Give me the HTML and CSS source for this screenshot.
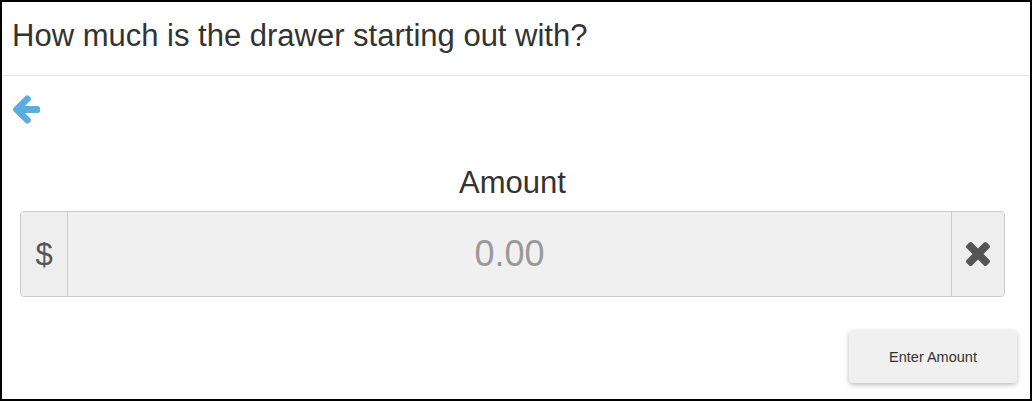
FILE: index.html
```html
<!DOCTYPE html>
<html lang="en">

<head>
    <meta charset="UTF-8">
    <meta name="viewport" content="width=device-width, initial-scale=1.0">
    <title>Starting Amount</title>
    <link rel="stylesheet" href="styles.css">
</head>

<body>
    <div class="frame">
        <!-- Question header -->
        <div class="header">How much is the drawer starting out with?</div>

        <!-- Back arrow -->
        <div class="back">
            <svg width="27" height="29" viewBox="192 181 1472 1558" aria-hidden="true">
                <path fill="#5aade0" d="M1664 896v128q0 53-32.5 90.5t-84.5 37.5h-704l293 294q38 36 38 90t-38 90l-75 76q-37 37-90 37-52 0-91-37l-651-652q-37-37-37-90 0-52 37-91l651-650q38-38 91-38 52 0 90 38l75 74q38 38 38 91t-38 91l-293 293h704q52 0 84.5 37.5t32.5 90.5z"/>
            </svg>
        </div>

        <!-- Amount entry -->
        <div class="amount-label">Amount</div>
        <div class="input-group">
            <span class="addon addon-left">$</span>
            <input class="amount-input" type="text" placeholder="0.00">
            <span class="addon addon-right">
                <svg width="24" height="24" viewBox="302 366 1188 1188" aria-hidden="true">
                    <path fill="#555" d="M1490 1322q0 40-28 68l-136 136q-28 28-68 28t-68-28l-294-294-294 294q-28 28-68 28t-68-28l-136-136q-28-28-28-68t28-68l294-294-294-294q-28-28-28-68t28-68l136-136q28-28 68-28t68 28l294 294 294-294q28-28 68-28t68 28l136 136q28 28 28 68t-28 68l-294 294 294 294q28 28 28 68z"/>
                </svg>
            </span>
        </div>

        <!-- Submit -->
        <div class="actions">
            <button class="enter-btn">Enter Amount</button>
        </div>
    </div>
</body>

</html>
```

FILE: styles.css
```css
/* Page basics */
body {
    margin: 0;
    font-family: "Liberation Sans", Arial, sans-serif;
    color: #333;
    background: #fff;
}

/* Outer black frame */
.frame {
    box-sizing: border-box;
    width: 1032px;
    height: 401px;
    border: 2px solid #000;
    overflow: hidden;
}

/* Question header */
.header {
    font-size: 31px;
    line-height: 33px;
    padding: 17px 10px 23px;
    border-bottom: 1px solid #e5e5e5;
}

/* Back arrow */
.back {
    padding: 19px 0 0 11px;
}

.back svg {
    display: block;
}

/* Amount label */
.amount-label {
    font-size: 31px;
    line-height: 33px;
    text-align: center;
    margin: 42px 25px 12px 18px;
}

/* Input group with addons */
.input-group {
    display: flex;
    height: 86px;
    box-sizing: border-box;
    margin: 0 25px 0 18px;
    border: 1px solid #ccc;
    border-radius: 4px;
    overflow: hidden;
    background: #f0f0f0;
}

.addon {
    display: flex;
    align-items: center;
    justify-content: center;
    background: #eee;
    color: #555;
}

.addon-left {
    width: 46px;
    border-right: 1px solid #ccc;
    font-size: 31px;
    padding-top: 2px;
}

.addon-right {
    width: 52px;
    border-left: 1px solid #ccc;
}

.amount-input {
    flex: 1;
    min-width: 0;
    border: 0;
    outline: none;
    background: #f0f0f0;
    font-family: "Liberation Sans", Arial, sans-serif;
    font-size: 36px;
    text-align: center;
    color: #555;
    padding: 0;
}

.amount-input::placeholder {
    color: #999;
}

/* Enter button */
.actions {
    display: flex;
    justify-content: flex-end;
    margin: 33px 13px 0 0;
}

.enter-btn {
    width: 168px;
    height: 53px;
    border: 0;
    border-radius: 4px;
    background: #f0f0f0;
    color: #333;
    font-family: "Liberation Sans", Arial, sans-serif;
    font-size: 14.5px;
    box-shadow: 0 2px 5px rgba(0, 0, 0, 0.26);
}
```
